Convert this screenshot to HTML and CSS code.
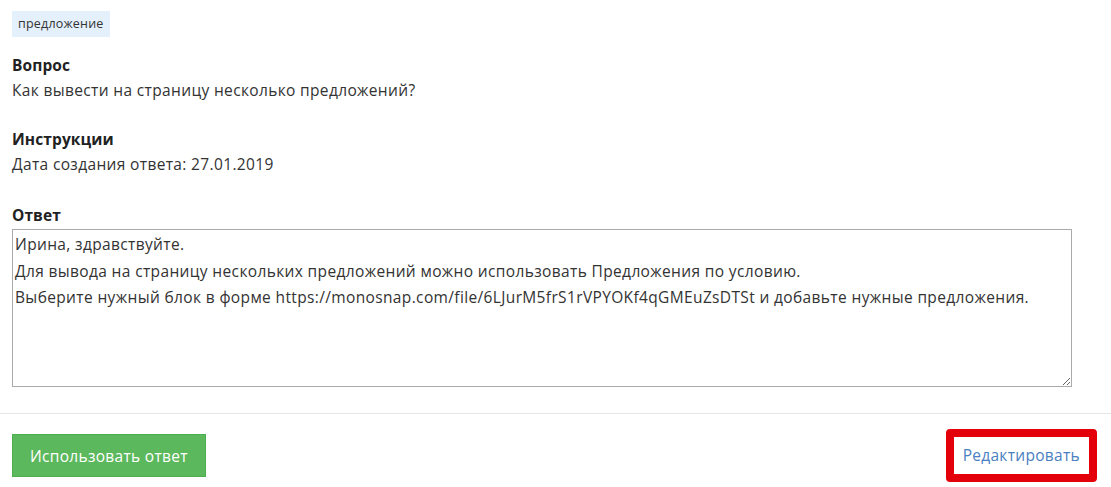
FILE: index.html
```html
<!DOCTYPE html>
<html lang="ru">
<head>
    <meta charset="UTF-8">
    <title>Ответ на вопрос</title>
    <link rel="stylesheet" href="styles.css">
</head>
<body>

<!-- Question details -->
<div class="content">
    <span class="tag">предложение</span>

    <div class="field">
        <div class="field-label">Вопрос</div>
        <div class="field-value">Как вывести на страницу несколько предложений?</div>
    </div>

    <div class="field">
        <div class="field-label">Инструкции</div>
        <div class="field-value">Дата создания ответа: 27.01.2019</div>
    </div>

    <div class="field field-answer">
        <div class="field-label">Ответ</div>
        <textarea class="answer">Ирина, здравствуйте.
Для вывода на страницу нескольких предложений можно использовать Предложения по условию.
Выберите нужный блок в форме https://monosnap.com/file/6LJurM5frS1rVPYOKf4qGMEuZsDTSt и добавьте нужные предложения.</textarea>
    </div>
</div>

<!-- Footer actions -->
<div class="footer">
    <button class="btn-use">Использовать ответ</button>
    <a href="#" class="btn-edit">Редактировать</a>
</div>

</body>
</html>
```

FILE: styles.css
```css
/* Global Styles */
body {
    margin: 0;
    font-family: "Open Sans", "Liberation Sans", sans-serif;
    font-size: 15.5px;
    letter-spacing: 0.35px;
    color: #333;
    background: #fff;
}

.content {
    padding: 11px 12px 0;
}

/* Tag */
.tag {
    display: inline-block;
    height: 26px;
    line-height: 26px;
    padding: 0 6px;
    font-size: 12.5px;
    letter-spacing: 0.2px;
    color: #333;
    background: #e4f0fc;
}

/* Fields */
.field {
    margin-top: 16px;
}

.field + .field {
    margin-top: 24px;
}

.field-answer {
    margin-top: 26px !important;
}

.field-label {
    font-weight: bold;
    font-size: 15.5px;
    letter-spacing: 0.1px;
    line-height: 25px;
    color: #222;
}

.field-value {
    line-height: 25px;
}

.answer {
    display: block;
    box-sizing: border-box;
    width: 1060px;
    height: 158px;
    margin: 1px 0 0;
    padding: 1px 2px;
    font-family: inherit;
    font-size: 15.5px;
    letter-spacing: 0.36px;
    line-height: 26.5px;
    color: #333;
    border: 1px solid #aaa;
    outline: none;
}

/* Footer */
.footer {
    margin-top: 26px;
    border-top: 1px solid #e5e5e5;
    padding: 15px 14px 5px 12px;
    display: flex;
    justify-content: space-between;
    align-items: center;
}

.btn-use {
    height: 43px;
    padding: 0 17px;
    font-family: inherit;
    font-size: 15.5px;
    letter-spacing: 0.3px;
    color: #fff;
    background: #5cb85c;
    border: 1px solid #4cae4c;
    cursor: pointer;
}

.btn-edit {
    display: inline-block;
    padding: 8px 9px;
    line-height: 21px;
    letter-spacing: 0.3px;
    color: #4a7fc1;
    text-decoration: none;
    border: 8px solid #e3000b;
    border-radius: 4px;
}
```
